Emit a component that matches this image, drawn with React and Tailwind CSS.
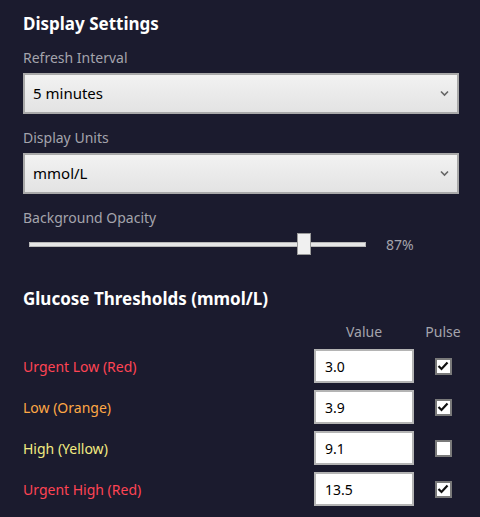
import React from "react";

const font = { fontFamily: '"Segoe UI", "Noto Sans", sans-serif' };

const Select = ({ value }) => (
  <div className="relative mr-[2px] h-[41px] border-2 border-[#a9a9a9] bg-gradient-to-b from-[#f2f2f2] to-[#e3e3e3]">
    <div className="flex h-full items-center pl-[8px] text-[15px] text-black">{value}</div>
    <svg className="absolute right-[8px] top-[15px]" width="9" height="7" viewBox="0 0 9 7">
      <path d="M1 1.5 L4.5 5 L8 1.5" fill="none" stroke="#666" strokeWidth="1.6" />
    </svg>
  </div>
);

const Check = ({ on }) => (
  <div className="flex h-[17px] w-[17px] items-center justify-center border-2 border-[#7a7a7a] bg-white">
    {on && (
      <svg width="12" height="10" viewBox="0 0 12 10">
        <path d="M1.5 5 L4.5 8 L10.5 1.5" fill="none" stroke="#111" strokeWidth="2.2" />
      </svg>
    )}
  </div>
);

const rows = [
  { label: "Urgent Low (Red)", color: "text-[#ff4454]", value: "3.0", pulse: true },
  { label: "Low (Orange)", color: "text-[#ffa845]", value: "3.9", pulse: true },
  { label: "High (Yellow)", color: "text-[#f3eb82]", value: "9.1", pulse: false },
  { label: "Urgent High (Red)", color: "text-[#ff4454]", value: "13.5", pulse: true },
];

export default function App() {
  return (
    <div className="h-[517px] w-[480px] overflow-hidden bg-[#1b1b2e] pl-[23px] pr-[19px] pt-[12px]" style={font}>
      <h2 className="text-[17px] font-bold leading-[24px] text-white">Display Settings</h2>

      <div className="mt-[12px] text-[14px] leading-[20px] text-[#a4a4ac]">Refresh Interval</div>
      <div className="mt-[5px]">
        <Select value="5 minutes" />
      </div>

      <div className="mt-[14px] text-[14px] leading-[20px] text-[#a4a4ac]">Display Units</div>
      <div className="mt-[5px]">
        <Select value="mmol/L" />
      </div>

      <div className="mt-[14px] text-[14px] leading-[20px] text-[#a4a4ac]">Background Opacity</div>
      <div className="mt-[5px] flex h-[22px] items-center">
        <div className="relative ml-[6px] h-[5px] w-[337px] border border-[#b8b8b8] bg-[#e6e6e6]">
          <div className="absolute left-[267px] top-[-10px] h-[22px] w-[14px] border border-[#9a9a9a] bg-[#f0f0f0]" />
        </div>
        <span className="ml-[20px] text-[14px] text-[#a4a4ac]">87%</span>
      </div>

      <h2 className="mt-[32px] text-[17px] font-bold leading-[24px] text-white">Glucose Thresholds (mmol/L)</h2>

      <div className="mt-[11px] flex text-[14px] leading-[20px] text-[#a4a4ac]">
        <div className="flex-1" />
        <div className="w-[100px] text-center">Value</div>
        <div className="ml-[11px] w-[36px] text-center">Pulse</div>
      </div>

      <div className="mt-[7px] flex flex-col gap-[7px]">
        {rows.map((r) => (
          <div key={r.label} className="flex h-[34px] items-center">
            <div className={`flex-1 text-[14px] ${r.color}`}>{r.label}</div>
            <div className="flex h-[34px] w-[100px] items-center border-2 border-[#b4b4b4] bg-white pl-[9px] text-[14px] text-black">
              {r.value}
            </div>
            <div className="ml-[11px] flex w-[36px] justify-center">
              <Check on={r.pulse} />
            </div>
          </div>
        ))}
      </div>
    </div>
  );
}
